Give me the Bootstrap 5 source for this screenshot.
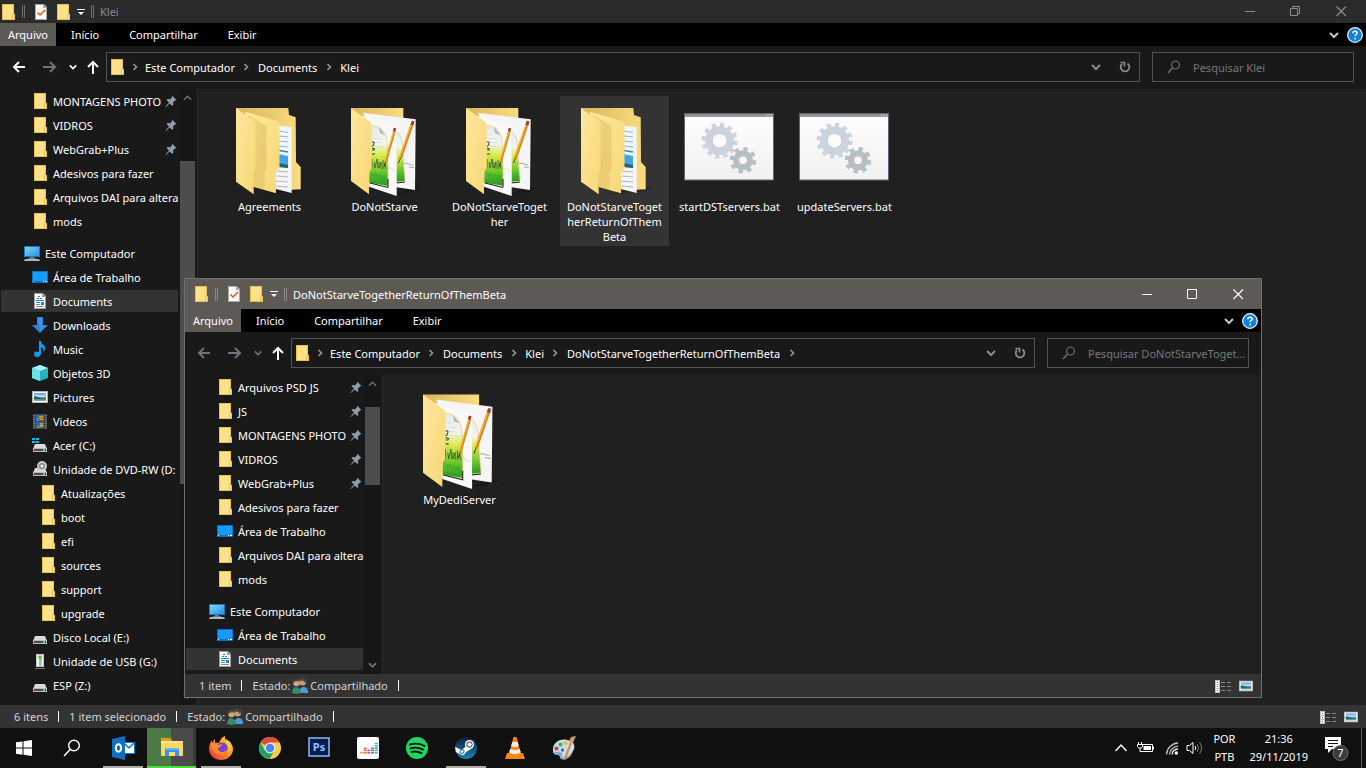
<!DOCTYPE html>
<html lang="pt-BR">
<head>
    <meta charset="UTF-8">
    <meta name="viewport" content="width=device-width, initial-scale=1.0">
    <title>Klei</title>
    <link href="https://cdn.jsdelivr.net/npm/bootstrap@5.3.3/dist/css/bootstrap.min.css" rel="stylesheet">
    <style>
        body {
            font-family: "Noto Sans", "Open Sans", sans-serif;
            font-size: 11px;
            line-height: 15px;
            color: #fff;
            background: #202020;
        }
        button {
            padding: 0;
            border: 0;
            color: inherit;
            background: none;
        }
        a {
            color: inherit;
            text-decoration: none;
        }
        svg {
            display: block;
            flex: none;
        }
        .ic {
            width: 16px;
            height: 16px;
        }

        /* explorer window */
        .win {
            background: #191919;
        }
        .win-title {
            height: 23px;
            padding-right: 2px;
            color: #8c8c8c;
            background: #2b2b2b;
        }
        .quick {
            gap: 6px;
        }
        .quick .first {
            margin-left: 2px;
        }
        .grip {
            width: 3px;
            height: 13px;
            border: solid #6d6d6d;
            border-width: 0 1px;
        }
        .win-btn {
            width: 46px;
            height: 100%;
        }
        .win-front {
            position: absolute;
            top: 278px;
            right: 104px;
            bottom: 30px;
            left: 184px;
            border: 1px solid #72706e;
        }
        .win-front .win-title {
            height: 30px;
            padding-left: 8px;
            padding-right: 0;
            color: #fff;
            background: #5d5955;
        }
        .win-front .grip {
            border-color: #8b8885;
        }

        .ribbon {
            height: 23px;
            padding-right: 3px;
            color: #fff;
            background: #000;
        }
        .ribbon-tab {
            height: 100%;
            padding: 0 15px;
        }
        .ribbon-tab.current {
            padding: 0 8px;
            background: #5d5955;
        }
        .ribbon-more {
            color: #c4c4c4;
        }

        .address {
            height: 43px;
            padding: 6px 12px 7px 0;
        }
        .nav-keys {
            width: 106px;
            padding: 0 6px 0 12px;
        }
        .path-box, .find-box {
            height: 30px;
            border: 1px solid #535353;
        }
        .path-box {
            margin-right: 12px;
            padding-left: 2px;
        }
        .sep {
            width: 23px;
            color: #9a9a9a;
        }
        .sep.lead-in {
            width: 20px;
        }
        .path-end {
            width: 29px;
            height: 100%;
            color: #8c8c8c;
        }
        .find-box {
            width: 202px;
            padding-left: 14px;
            color: #787878;
        }
        .find-box input {
            min-width: 0;
            padding: 0;
            border: 0;
            outline: 0;
            color: #fff;
            background: none;
        }
        .find-box input::placeholder {
            color: #787878;
            opacity: 1;
        }

        /* folder tree */
        .tree {
            width: 180px;
            padding: 1px 1px 0;
            gap: 2px;
        }
        .tree a {
            display: flex;
            flex: none;
            align-items: center;
            gap: 5px;
            height: 22px;
            padding-left: 31px;
            white-space: nowrap;
        }
        .tree a.root {
            margin-top: 8px;
            padding-left: 23px;
        }
        .tree a.deep {
            padding-left: 39px;
        }
        .tree a.picked {
            margin-right: 1px;
            background: #333;
        }
        .tree .pinned span {
            width: 110px;
        }
        .tree .pin {
            width: 12px;
            height: 12px;
            margin-left: -3px;
        }
        .scroller {
            width: 15px;
            background: #171717;
        }
        .scroller svg {
            margin: 4px auto;
        }
        .thumb {
            background: #4d4d4d;
        }
        .files {
            margin-left: 2px;
            padding: 7px 17px;
            gap: 6px;
            border-left: 1px solid #2b2b2b;
            background: #202020;
        }
        .file {
            width: 109px;
            padding: 5px 0 2px;
            text-align: center;
        }
        .file.picked {
            background: #333;
        }
        .file svg {
            width: 96px;
            height: 96px;
            margin: 0 auto 2px;
        }
        .files-front {
            padding-left: 22px;
        }
        .files-front .file svg {
            width: 103px;
            height: 103px;
        }

        .status {
            height: 23px;
            padding: 0 8px 0 14px;
            color: #d4d4d4;
            background: #333;
        }
        .status .shared {
            margin: 0 2px;
        }
        .bar {
            width: 1px;
            height: 11px;
            margin: 0 10px;
            background: #fff;
        }

        /* taskbar */
        .taskbar {
            height: 40px;
            background: #101010;
        }
        .sys-key {
            width: 48px;
            height: 100%;
        }
        .apps {
            height: 100%;
            margin-left: 2px;
        }
        .app {
            position: relative;
            display: flex;
            align-items: center;
            justify-content: center;
            width: 49px;
            height: 100%;
        }
        .app svg {
            width: 24px;
            height: 24px;
        }
        .app.open::after {
            content: "";
            position: absolute;
            bottom: 0;
            width: 40px;
            height: 2px;
            background: #b0aba8;
        }
        .app.busy {
            border-bottom: 2px solid #4be037;
            background: linear-gradient(90deg, #4a7a45 24px, #4a4a4a 24px, #4a4a4a 46px, #3a3a3a 46px);
        }
        .tray {
            gap: 6px;
            margin-right: 9px;
        }
        .clock {
            line-height: 18px;
            text-align: center;
        }
        .desk-edge {
            width: 5px;
            border-left: 1px solid #5c5c5c;
        }
    </style>
</head>
<body>
    <svg width="0" height="0" class="position-absolute" aria-hidden="true">
        <defs>
            <linearGradient id="gFlap" x1="0" y1="0" x2="1" y2="1"><stop offset="0" stop-color="#ffe79c"/><stop offset="1" stop-color="#f8d775"/></linearGradient>
            <linearGradient id="gBack" x1="0" y1="0" x2="1" y2="0"><stop offset="0" stop-color="#d9b65c"/><stop offset="1" stop-color="#fbdc80"/></linearGradient>
            <linearGradient id="gPad" x1="0" y1="0" x2="0" y2="1"><stop offset="0" stop-color="#e4e9ee"/><stop offset=".3" stop-color="#f3f6ec"/><stop offset=".5" stop-color="#dbe94a"/><stop offset=".75" stop-color="#73c82d"/><stop offset="1" stop-color="#1c9a22"/></linearGradient>
            <linearGradient id="gBlue" x1="0" y1="0" x2="1" y2="1"><stop offset="0" stop-color="#8bd3fb"/><stop offset="1" stop-color="#1f94e6"/></linearGradient>
            <linearGradient id="gBat" x1="0" y1="0" x2="0" y2="1"><stop offset="0" stop-color="#fdfdfd"/><stop offset="1" stop-color="#f1f1f1"/></linearGradient>
            <linearGradient id="gSky" x1="0" y1="0" x2="0" y2="1"><stop offset="0" stop-color="#4d9df0"/><stop offset=".5" stop-color="#d5ecf8"/><stop offset=".6" stop-color="#2c6a6a"/><stop offset="1" stop-color="#77b9cf"/></linearGradient>
            <linearGradient id="gFox" x1="1" y1="0" x2="0" y2="1"><stop offset="0" stop-color="#ffe03a"/><stop offset=".45" stop-color="#ff9421"/><stop offset="1" stop-color="#f5204f"/></linearGradient>
            <linearGradient id="gSteam" x1="0" y1="0" x2="0" y2="1"><stop offset="0" stop-color="#131c3d"/><stop offset="1" stop-color="#1586b8"/></linearGradient>
        </defs>
        <symbol id="folder" viewBox="0 0 16 16"><path d="M2 0h12v9.500l1 .500v6H2z" fill="#e8c04b"/><path d="M3 1h10v9l-1 1v4H3z" fill="#ffe18a"/><path d="M13 11h1v4h-1z" fill="#fff0b5"/></symbol>
        <symbol id="pin" viewBox="0 0 12 12"><path d="M7 .500L11.500 5l-1.500.500-2 2 .200 2.500-1 1L4.700 8.500 1 12l-.500-.500L4 7.500 1.500 5l1-1 2.500.200 2-2z" fill="#8d9ba6"/></symbol>
        <symbol id="check" viewBox="0 0 16 16"><path d="M2 0h9l3 3v13H2z" fill="#a9a9a9"/><path d="M3 1h7v3h3v11H3z" fill="#fafafa"/><path d="M4.500 8.500L7 11l5-5" fill="none" stroke="#e8551d" stroke-width="1.500"/></symbol>
        <symbol id="pc" viewBox="0 0 16 16"><path d="M0 1h16v11H0z" fill="#2176ae"/><path d="M1 2h14v9H1z" fill="url(#gBlue)"/><path d="M6 12h4v1H6zM4 13h8v1H4z" fill="#6e7b84"/><path d="M1 14h14l1 2H0z" fill="#a8b9c5"/></symbol>
        <symbol id="desk" viewBox="0 0 16 16"><path d="M0 2h16v12H0z" fill="#0c70c6"/><path d="M1 3h14v9H1z" fill="#159bff"/><path d="M1 12h1v1H1zM11 12h1v1h-1zM13 12h2v1h-2z" fill="#fff"/></symbol>
        <symbol id="docs" viewBox="0 0 16 16"><path d="M2 0h9l3 3v13H2z" fill="#a0a0a0"/><path d="M3 1h7v3h3v11H3z" fill="#fff"/><path d="M6 3.500h2M5 5.500h2M8 5.500h2M4 7.500h8M4 9.500h4" stroke="#1a83c9"/><path d="M9 9h3v3H9z" fill="#2c86a3"/><path d="M4 11.500h4M4 13.500h8" stroke="#888"/></symbol>
        <symbol id="down" viewBox="0 0 16 16"><path d="M5 0h6v8h5l-8 8-8-8h5z" fill="#2f82d5"/><path d="M6 1h4v8h3l-5 5z" fill="#3d93e6"/></symbol>
        <symbol id="music" viewBox="0 0 16 16"><path d="M7 0h2c0 3 4 4 4 7 0 2-1 3-2 4 1-3 0-4-2-5v6c0 5-7 5-7 1 0-3 3-3 5-2z" fill="#109cf5"/></symbol>
        <symbol id="cube" viewBox="0 0 16 16"><path d="M0 3l8-3 8 3v10l-8 3-8-3z" fill="#25b2c2"/><path d="M0 3l8-3 8 3-8 3z" fill="#aaf2f7"/><path d="M0 3l8 3v10l-8-3z" fill="#6de0e7"/></symbol>
        <symbol id="pics" viewBox="0 0 16 16"><path d="M0 2h16v12H0z" fill="#b5b5b5"/><path d="M1 3h14v10H1z" fill="#fff"/><path d="M2 4h12v8H2z" fill="url(#gSky)"/><path d="M2 7l4 1 5 2H2z" fill="#276258"/></symbol>
        <symbol id="film" viewBox="0 0 16 16"><path d="M1 1h14v15H1z" fill="#474747"/><path d="M2 2v13M14 2v13" stroke="#a5a5a5" stroke-dasharray="1 1"/><path d="M4 2h8v6H4zM4 9h8v6H4z" fill="#2767c8"/><path d="M7 3h4v4H8zM8 10h3v4H8z" fill="#d69a28"/><path d="M5 5h2v3H5zM5 13h3v2H5z" fill="#5a9f47"/><path d="M9 4h1v2H9zM9 11h1v1H9z" fill="#d83c21"/></symbol>
        <symbol id="drive" viewBox="0 0 16 16"><path d="M3 7h10l2 5H1z" fill="#dadada"/><path d="M1 11h14v4H1z" fill="#bcbcbc"/><path d="M2 12h12v2H2z" fill="#4b4b4b"/><path d="M11 12h2v2h-2z" fill="#4ae04b"/></symbol>
        <symbol id="win-drive" viewBox="0 0 16 16"><use href="#drive"/><path d="M0 1h3v2H0zM4 1h3v2H4zM0 4h3v2H0zM4 4h3v2H4z" fill="#0fb8f0"/></symbol>
        <symbol id="dvd" viewBox="0 0 16 16"><use href="#drive"/><circle cx="10" cy="5" r="4" fill="#888" stroke="#c8c8c8" stroke-width="2"/><circle cx="10" cy="5" r="1.500" fill="#f3f3f3"/></symbol>
        <symbol id="usb" viewBox="0 0 16 16"><path d="M4 1h8v13H4z" fill="#c4c9c4"/><path d="M5 2h2v11H5zM10 2h1v11h-1z" fill="#f4f6f4"/><path d="M7 5h2v8H7z" fill="#b2b8b2"/><path d="M6 3h4v2H9v2H7V5H6z" fill="#70bd53"/><path d="M3 15h10v1H3z" fill="#777"/></symbol>
        <symbol id="people" viewBox="0 0 16 16"><circle cx="10.500" cy="4" r="3.500" fill="#c59979"/><path d="M7 3c0-4 7-4 7 0l-1 2c-1-3-4-3-6-2" fill="#464240"/><path d="M7 15c0-7 8-8 9-2v2z" fill="#4f9bd0"/><circle cx="4.500" cy="5" r="3.200" fill="#d6a57f"/><path d="M1 5c0-5 6-5 7-1-2-1-4-1-5 0z" fill="#5b4a3f"/><path d="M0 15c0-8 8-8 9 0-2 1-7 1-9 0z" fill="#368a70"/></symbol>
        <symbol id="details" viewBox="0 0 16 16"><path d="M0 2h5v13H0z" fill="#c0c0c0"/><path d="M1 3h3v3H1zM1 7h3v3H1zM1 11h3v3H1z" fill="#fff"/><path d="M2 4h1v1H2z" fill="#4778bb"/><path d="M2 8h1v1H2z" fill="#2671e0"/><path d="M2 12h1v1H2z" fill="#d92a2a"/><path d="M6 4.500h4M12 4.500h4M6 8.500h4M12 8.500h4M6 12.500h4M12 12.500h4" stroke="#868686"/></symbol>
        <symbol id="chev-r" viewBox="0 0 8 8"><path d="M2.500 1l3 3-3 3" fill="none" stroke="currentColor" stroke-width="1.500"/></symbol>
        <symbol id="chev-d" viewBox="0 0 10 10"><path d="M1 3l4 4 4-4" fill="none" stroke="currentColor" stroke-width="2"/></symbol>
        <symbol id="chev-u" viewBox="0 0 10 10"><path d="M1 7l4-4 4 4" fill="none" stroke="currentColor" stroke-width="1.500"/></symbol>
        <symbol id="left" viewBox="0 0 14 14"><path d="M13 7H2M7 2L2 7l5 5" fill="none" stroke="currentColor" stroke-width="2"/></symbol>
        <symbol id="right" viewBox="0 0 14 14"><path d="M0 7h12M7 2l5 5-5 5" fill="none" stroke="currentColor" stroke-width="2"/></symbol>
        <symbol id="up" viewBox="0 0 14 14"><path d="M7 14V2M2 7l5-5 5 5" fill="none" stroke="currentColor" stroke-width="2"/></symbol>
        <symbol id="drop" viewBox="0 0 8 8"><path d="M0 1.500h8" stroke="currentColor"/><path d="M1 4h6L4 7z" fill="currentColor"/></symbol>
        <symbol id="reload" viewBox="0 0 12 12"><path d="M8.500 2.500A4.300 4.300 0 1 1 3 3" fill="none" stroke="currentColor" stroke-width="1.800"/><path d="M1.500 1.500h4v4" fill="none" stroke="currentColor" stroke-width="1.600"/></symbol>
        <symbol id="find" viewBox="0 0 14 14"><circle cx="8.500" cy="5" r="4" fill="none" stroke="currentColor"/><path d="M5.500 8L1 13" stroke="currentColor" stroke-width="1.200"/></symbol>
        <symbol id="help" viewBox="0 0 16 16"><circle cx="8" cy="8" r="7.300" fill="#1380db" stroke="#e4f1fb" stroke-width="1.300"/><path d="M5.800 6.300c0-3 4.500-2.600 4.300-.200C10 7.600 8.100 7.500 8.100 9.300M8.100 10.800v1.600" fill="none" stroke="#fff" stroke-width="1.500"/></symbol>
        <symbol id="min" viewBox="0 0 11 11"><path d="M1 5.500h10" stroke="currentColor"/></symbol>
        <symbol id="max" viewBox="0 0 11 11"><path d="M.500.500h9v9h-9z" fill="none" stroke="currentColor"/></symbol>
        <symbol id="restore" viewBox="0 0 11 11"><path d="M.500 2.500h7v7h-7zM2.500 2V.500h7v7H8" fill="none" stroke="currentColor"/></symbol>
        <symbol id="close" viewBox="0 0 11 11"><path d="M.500.500l9.500 9.500M10 .500L.500 10" stroke="currentColor" stroke-width="1.200"/></symbol>

        <!-- large folder holding another folder and a document -->
        <symbol id="big-docs" viewBox="0 0 96 96">
            <path d="M66 88l20-2-8 4-40 4z" fill="#111" opacity=".4"/>
            <path d="M14 7h52.300l.700 7 6.700 2.300L74 61l4.700 5v22.300L66 89 14 70z" fill="url(#gBack)"/>
            <path d="M54 24l15.700 2.300V92L50 87z" fill="#f4f5f7"/>
            <path d="M57 30l9 1.500M57 35l9 1M57 40l9 1M57 45l9 1" stroke="#7dbbe5"/>
            <path d="M57 49.500l9 1.500" stroke="#248bd4" stroke-width="1.600"/>
            <path d="M57 53l9 2v12l-9-1z" fill="#45a2e5"/><path d="M57 62l9 2v3l-9-1z" fill="#27636b"/>
            <path d="M55 70l11 1M55 75l11 1M54 80l12 1M54 85l12 1" stroke="#b5b5b8"/>
            <path d="M23 10.700l32.500 9.300q2 1 2 3v44L54 70.700v21.600L31.700 86z" fill="url(#gFlap)"/>
            <path d="M26 14l17 10q1.500 1 1.500 3v41l-2 3v17l-10.800-3z" fill="#dab95f" opacity=".45"/>
            <path d="M14 7l17 12q2.500 2 2.500 4v46l-1.800 3v21.300L14 80.700z" fill="url(#gFlap)"/>
        </symbol>
        <!-- large folder holding two notepad style files -->
        <symbol id="big-notes" viewBox="0 0 96 96">
            <path d="M70 88l16-2-8 4-18 4z" fill="#111" opacity=".4"/>
            <path d="M14 7h52.300v20L30 30z" fill="url(#gBack)"/>
            <path d="M26 11.700l52.700 6.600L78 89l-20-3z" fill="#f5f5f6"/>
            <path d="M59 30q7 4 6.500 20l2.500 30-9 1z" fill="url(#gPad)" stroke="#e8c46e" stroke-width=".600"/>
            <path d="M59 82l9-1" stroke="#222"/>
            <path d="M75.500 22L63.500 57" stroke="#d6881a" stroke-width="3"/><path d="M74.700 22L63 56" stroke="#ffc038"/>
            <path d="M76 20l-1 4" stroke="#99403e" stroke-width="3"/><path d="M63.500 57l-2 5" stroke="#444"/>
            <path d="M67 62l5 1 4 1M72 66l5 .500" stroke="#aaa" fill="none"/>
            <path d="M16 12.300L59.700 25v70L32 85.700z" fill="#f9f9fa"/>
            <path d="M33 24l9 2q7 4 8 14l1 17v28l-19-3z" fill="url(#gPad)" stroke="#e9cc85" stroke-width=".700"/>
            <path d="M42 26l1 6 5 2z" fill="#aeb2b8"/>
            <path d="M33 82l18 4.500V78" fill="none" stroke="#222"/>
            <path d="M34 33l6 1M34 37l11 1M34 41l12 1M34 45l13 1" stroke="#cdd5de" stroke-width=".700"/>
            <path d="M35 41q3-1 2 2t-2 2M35 47l3 1-2 2M35 53h3" fill="none" stroke="#37432c"/>
            <path d="M35 49h3" stroke="#3db23a" stroke-width="1.500"/>
            <path d="M35 58v9M37 61l1 6 2-9 1 9M42 61v6l2-6v7M46 59v9M48 62l1 6" fill="none" stroke="#3f6a2a" stroke-width=".900"/>
            <path d="M34 75l2-3 1 4 2-4 2 5 2-4 2 5 2-4 1 5" fill="none" stroke="#2faa2b" stroke-width=".800"/>
            <path d="M57.500 30L48.500 61" stroke="#d6881a" stroke-width="2.600"/><path d="M56.800 30L48 60" stroke="#ffc038"/>
            <path d="M58 27l-1 3.500" stroke="#99403e" stroke-width="2.600"/><path d="M48.500 61l-1.500 5" stroke="#333"/>
            <path d="M51 66l7 4" stroke="#e3dfcd"/>
            <path d="M14 7l18 13q2.700 2 2.700 4v43L32 70.700v22.600L14 80z" fill="url(#gFlap)"/>
        </symbol>
        <!-- batch file: window with two gears -->
        <symbol id="big-bat" viewBox="0 0 96 96">
            <path d="M2 12h90v67.500H2z" fill="#62666c"/><path d="M3 15.500h88V78.500H3z" fill="url(#gBat)"/><path d="M3 13h88v2.500H3z" fill="#8b8f96"/>
            <path d="M84 14h1.500M86.500 14h1.500M89 14h1.500" stroke="#d5d8dc"/>
            <g fill="none" stroke="#cbd4dc"><circle cx="37.500" cy="39.700" r="10.800" stroke-width="7.500"/><circle cx="37.500" cy="39.700" r="15.700" stroke-width="4.500" stroke-dasharray="4.110 4.110"/></g>
            <circle cx="37.500" cy="39.700" r="7.200" fill="#fbfbfb" stroke="#b7c1ca" stroke-width=".700"/>
            <g fill="none" stroke="#b6bfc4"><circle cx="61" cy="59.300" r="6.800" stroke-width="6.500"/><circle cx="61" cy="59.300" r="11" stroke-width="4.500" stroke-dasharray="4.320 4.320"/></g>
            <circle cx="61" cy="59.300" r="3.700" fill="#f8f8f8"/>
        </symbol>
    </svg>

    <div class="vh-100 d-flex flex-column overflow-hidden">
        <div class="flex-grow-1 position-relative d-flex flex-column overflow-hidden">

            <!-- maximized window -->
            <section class="win flex-grow-1 d-flex flex-column overflow-hidden">
                <header class="win-title d-flex align-items-center">
                    <div class="quick d-flex align-items-center flex-grow-1">
                        <svg class="ic"><use href="#folder"/></svg>
                        <div class="grip"></div>
                        <button aria-label="Propriedades" class="first"><svg class="ic"><use href="#check"/></svg></button>
                        <button aria-label="Nova pasta"><svg class="ic"><use href="#folder"/></svg></button>
                        <button aria-label="Personalizar" class="text-white"><svg width="8" height="8"><use href="#drop"/></svg></button>
                        <div class="grip"></div>
                        <span>Klei</span>
                    </div>
                    <button class="win-btn d-flex align-items-center justify-content-center" aria-label="Minimizar"><svg width="11" height="11"><use href="#min"/></svg></button>
                    <button class="win-btn d-flex align-items-center justify-content-center" aria-label="Restaurar"><svg width="11" height="11"><use href="#restore"/></svg></button>
                    <button class="win-btn d-flex align-items-center justify-content-center" aria-label="Fechar"><svg width="11" height="11"><use href="#close"/></svg></button>
                </header>
                <nav class="ribbon d-flex align-items-center">
                    <button class="ribbon-tab current">Arquivo</button>
                    <button class="ribbon-tab">Início</button>
                    <button class="ribbon-tab">Compartilhar</button>
                    <button class="ribbon-tab">Exibir</button>
                    <button class="ribbon-more ms-auto me-2" aria-label="Expandir"><svg width="10" height="10"><use href="#chev-d"/></svg></button>
                    <button aria-label="Ajuda"><svg class="ic"><use href="#help"/></svg></button>
                </nav>
                <div class="address d-flex">
                    <div class="nav-keys d-flex align-items-center justify-content-between">
                        <button aria-label="Voltar"><svg width="14" height="14"><use href="#left"/></svg></button>
                        <button aria-label="Avançar" class="ms-2 text-secondary"><svg width="14" height="14"><use href="#right"/></svg></button>
                        <button aria-label="Recentes" class="ms-1"><svg width="8" height="8"><use href="#chev-d"/></svg></button>
                        <button aria-label="Acima"><svg width="14" height="14"><use href="#up"/></svg></button>
                    </div>
                    <div class="path-box d-flex align-items-center flex-grow-1">
                        <svg class="ic"><use href="#folder"/></svg>
                        <span class="sep lead-in d-flex justify-content-center"><svg width="8" height="8"><use href="#chev-r"/></svg></span>
                        <a href="#">Este Computador</a>
                        <span class="sep d-flex justify-content-center"><svg width="8" height="8"><use href="#chev-r"/></svg></span>
                        <a href="#">Documents</a>
                        <span class="sep d-flex justify-content-center"><svg width="8" height="8"><use href="#chev-r"/></svg></span>
                        <a href="#">Klei</a>
                        <button class="path-end ms-auto d-flex align-items-center justify-content-center" aria-label="Locais anteriores"><svg width="10" height="10"><use href="#chev-d"/></svg></button>
                        <button class="path-end d-flex align-items-center justify-content-center" aria-label="Atualizar"><svg width="12" height="12"><use href="#reload"/></svg></button>
                    </div>
                    <div class="find-box d-flex align-items-center gap-2">
                        <svg width="14" height="14" class="me-1"><use href="#find"/></svg>
                        <label for="find-klei" class="visually-hidden">Pesquisar Klei</label>
                        <input type="text" id="find-klei" class="flex-grow-1" placeholder="Pesquisar Klei">
                    </div>
                </div>
                <div class="flex-grow-1 d-flex overflow-hidden">
                    <nav class="tree d-flex flex-column overflow-hidden flex-shrink-0">
                        <a href="#" class="pinned"><svg class="ic"><use href="#folder"/></svg><span>MONTAGENS PHOTO</span><svg class="pin"><use href="#pin"/></svg></a>
                        <a href="#" class="pinned"><svg class="ic"><use href="#folder"/></svg><span>VIDROS</span><svg class="pin"><use href="#pin"/></svg></a>
                        <a href="#" class="pinned"><svg class="ic"><use href="#folder"/></svg><span>WebGrab+Plus</span><svg class="pin"><use href="#pin"/></svg></a>
                        <a href="#"><svg class="ic"><use href="#folder"/></svg>Adesivos para fazer</a>
                        <a href="#"><svg class="ic"><use href="#folder"/></svg>Arquivos DAI para altera</a>
                        <a href="#"><svg class="ic"><use href="#folder"/></svg>mods</a>
                        <a href="#" class="root"><svg class="ic"><use href="#pc"/></svg>Este Computador</a>
                        <a href="#"><svg class="ic"><use href="#desk"/></svg>Área de Trabalho</a>
                        <a href="#" class="picked"><svg class="ic"><use href="#docs"/></svg>Documents</a>
                        <a href="#"><svg class="ic"><use href="#down"/></svg>Downloads</a>
                        <a href="#"><svg class="ic"><use href="#music"/></svg>Music</a>
                        <a href="#"><svg class="ic"><use href="#cube"/></svg>Objetos 3D</a>
                        <a href="#"><svg class="ic"><use href="#pics"/></svg>Pictures</a>
                        <a href="#"><svg class="ic"><use href="#film"/></svg>Videos</a>
                        <a href="#"><svg class="ic"><use href="#win-drive"/></svg>Acer (C:)</a>
                        <a href="#"><svg class="ic"><use href="#dvd"/></svg>Unidade de DVD-RW (D:</a>
                        <a href="#" class="deep"><svg class="ic"><use href="#folder"/></svg>Atualizações</a>
                        <a href="#" class="deep"><svg class="ic"><use href="#folder"/></svg>boot</a>
                        <a href="#" class="deep"><svg class="ic"><use href="#folder"/></svg>efi</a>
                        <a href="#" class="deep"><svg class="ic"><use href="#folder"/></svg>sources</a>
                        <a href="#" class="deep"><svg class="ic"><use href="#folder"/></svg>support</a>
                        <a href="#" class="deep"><svg class="ic"><use href="#folder"/></svg>upgrade</a>
                        <a href="#"><svg class="ic"><use href="#drive"/></svg>Disco Local (E:)</a>
                        <a href="#"><svg class="ic"><use href="#usb"/></svg>Unidade de USB (G:)</a>
                        <a href="#"><svg class="ic"><use href="#drive"/></svg>ESP (Z:)</a>
                    </nav>
                    <div class="scroller d-flex flex-column flex-shrink-0 text-secondary">
                        <svg width="9" height="10"><use href="#chev-u"/></svg>
                        <div style="flex: 54"></div>
                        <div class="thumb" style="flex: 323"></div>
                        <div style="flex: 203"></div>
                        <svg width="9" height="10"><use href="#chev-d"/></svg>
                    </div>
                    <main class="files flex-grow-1 d-flex flex-wrap align-items-start align-content-start">
                        <a href="#" class="file"><svg><use href="#big-docs"/></svg>Agreements</a>
                        <a href="#" class="file"><svg><use href="#big-notes"/></svg>DoNotStarve</a>
                        <a href="#" class="file"><svg><use href="#big-notes"/></svg>DoNotStarveToget<br>her</a>
                        <a href="#" class="file picked"><svg><use href="#big-docs"/></svg>DoNotStarveToget<br>herReturnOfThem<br>Beta</a>
                        <a href="#" class="file"><svg><use href="#big-bat"/></svg>startDSTservers.bat</a>
                        <a href="#" class="file"><svg><use href="#big-bat"/></svg>updateServers.bat</a>
                    </main>
                </div>
                <footer class="status d-flex align-items-center">
                    <span>6 itens</span><span class="bar"></span>
                    <span>1 item selecionado</span><span class="bar"></span>
                    <span>Estado:</span><svg class="ic shared"><use href="#people"/></svg><span>Compartilhado</span><span class="bar"></span>
                    <button class="ms-auto me-2" aria-label="Detalhes"><svg class="ic"><use href="#details"/></svg></button>
                    <button aria-label="Miniaturas"><svg width="14" height="14"><use href="#pics"/></svg></button>
                </footer>
            </section>

            <!-- window in front -->
            <section class="win win-front d-flex flex-column overflow-hidden">
                <header class="win-title d-flex align-items-center">
                    <div class="quick d-flex align-items-center flex-grow-1">
                        <svg class="ic"><use href="#folder"/></svg>
                        <div class="grip"></div>
                        <button aria-label="Propriedades" class="first"><svg class="ic"><use href="#check"/></svg></button>
                        <button aria-label="Nova pasta"><svg class="ic"><use href="#folder"/></svg></button>
                        <button aria-label="Personalizar"><svg width="8" height="8"><use href="#drop"/></svg></button>
                        <div class="grip"></div>
                        <span>DoNotStarveTogetherReturnOfThemBeta</span>
                    </div>
                    <button class="win-btn d-flex align-items-center justify-content-center" aria-label="Minimizar"><svg width="11" height="11"><use href="#min"/></svg></button>
                    <button class="win-btn d-flex align-items-center justify-content-center" aria-label="Maximizar"><svg width="11" height="11"><use href="#max"/></svg></button>
                    <button class="win-btn d-flex align-items-center justify-content-center" aria-label="Fechar"><svg width="11" height="11"><use href="#close"/></svg></button>
                </header>
                <nav class="ribbon d-flex align-items-center">
                    <button class="ribbon-tab current">Arquivo</button>
                    <button class="ribbon-tab">Início</button>
                    <button class="ribbon-tab">Compartilhar</button>
                    <button class="ribbon-tab">Exibir</button>
                    <button class="ribbon-more ms-auto me-2" aria-label="Expandir"><svg width="10" height="10"><use href="#chev-d"/></svg></button>
                    <button aria-label="Ajuda"><svg class="ic"><use href="#help"/></svg></button>
                </nav>
                <div class="address d-flex">
                    <div class="nav-keys d-flex align-items-center justify-content-between">
                        <button aria-label="Voltar" class="text-secondary"><svg width="14" height="14"><use href="#left"/></svg></button>
                        <button aria-label="Avançar" class="ms-2 text-secondary"><svg width="14" height="14"><use href="#right"/></svg></button>
                        <button aria-label="Recentes" class="ms-1 text-secondary"><svg width="8" height="8"><use href="#chev-d"/></svg></button>
                        <button aria-label="Acima"><svg width="14" height="14"><use href="#up"/></svg></button>
                    </div>
                    <div class="path-box d-flex align-items-center flex-grow-1">
                        <svg class="ic"><use href="#folder"/></svg>
                        <span class="sep lead-in d-flex justify-content-center"><svg width="8" height="8"><use href="#chev-r"/></svg></span>
                        <a href="#">Este Computador</a>
                        <span class="sep d-flex justify-content-center"><svg width="8" height="8"><use href="#chev-r"/></svg></span>
                        <a href="#">Documents</a>
                        <span class="sep d-flex justify-content-center"><svg width="8" height="8"><use href="#chev-r"/></svg></span>
                        <a href="#">Klei</a>
                        <span class="sep d-flex justify-content-center"><svg width="8" height="8"><use href="#chev-r"/></svg></span>
                        <a href="#">DoNotStarveTogetherReturnOfThemBeta</a>
                        <span class="sep d-flex justify-content-center"><svg width="8" height="8"><use href="#chev-r"/></svg></span>
                        <button class="path-end ms-auto d-flex align-items-center justify-content-center" aria-label="Locais anteriores"><svg width="10" height="10"><use href="#chev-d"/></svg></button>
                        <button class="path-end d-flex align-items-center justify-content-center" aria-label="Atualizar"><svg width="12" height="12"><use href="#reload"/></svg></button>
                    </div>
                    <div class="find-box d-flex align-items-center gap-2">
                        <svg width="14" height="14" class="me-1"><use href="#find"/></svg>
                        <label for="find-beta" class="visually-hidden">Pesquisar</label>
                        <input type="text" id="find-beta" class="flex-grow-1" placeholder="Pesquisar DoNotStarveToget...">
                    </div>
                </div>
                <div class="flex-grow-1 d-flex overflow-hidden">
                    <nav class="tree d-flex flex-column overflow-hidden flex-shrink-0">
                        <a href="#" class="pinned"><svg class="ic"><use href="#folder"/></svg><span>Arquivos PSD JS</span><svg class="pin"><use href="#pin"/></svg></a>
                        <a href="#" class="pinned"><svg class="ic"><use href="#folder"/></svg><span>JS</span><svg class="pin"><use href="#pin"/></svg></a>
                        <a href="#" class="pinned"><svg class="ic"><use href="#folder"/></svg><span>MONTAGENS PHOTO</span><svg class="pin"><use href="#pin"/></svg></a>
                        <a href="#" class="pinned"><svg class="ic"><use href="#folder"/></svg><span>VIDROS</span><svg class="pin"><use href="#pin"/></svg></a>
                        <a href="#" class="pinned"><svg class="ic"><use href="#folder"/></svg><span>WebGrab+Plus</span><svg class="pin"><use href="#pin"/></svg></a>
                        <a href="#"><svg class="ic"><use href="#folder"/></svg>Adesivos para fazer</a>
                        <a href="#"><svg class="ic"><use href="#desk"/></svg>Área de Trabalho</a>
                        <a href="#"><svg class="ic"><use href="#folder"/></svg>Arquivos DAI para altera</a>
                        <a href="#"><svg class="ic"><use href="#folder"/></svg>mods</a>
                        <a href="#" class="root"><svg class="ic"><use href="#pc"/></svg>Este Computador</a>
                        <a href="#"><svg class="ic"><use href="#desk"/></svg>Área de Trabalho</a>
                        <a href="#" class="picked"><svg class="ic"><use href="#docs"/></svg>Documents</a>
                    </nav>
                    <div class="scroller d-flex flex-column flex-shrink-0 text-secondary">
                        <svg width="9" height="10"><use href="#chev-u"/></svg>
                        <div style="flex: 14"></div>
                        <div class="thumb" style="flex: 78"></div>
                        <div style="flex: 171"></div>
                        <svg width="9" height="10"><use href="#chev-d"/></svg>
                    </div>
                    <main class="files files-front flex-grow-1 d-flex flex-wrap align-items-start align-content-start">
                        <a href="#" class="file"><svg><use href="#big-notes"/></svg>MyDediServer</a>
                    </main>
                </div>
                <footer class="status d-flex align-items-center">
                    <span>1 item</span><span class="bar"></span>
                    <span>Estado:</span><svg class="ic shared"><use href="#people"/></svg><span>Compartilhado</span><span class="bar"></span>
                    <button class="ms-auto me-2" aria-label="Detalhes"><svg class="ic"><use href="#details"/></svg></button>
                    <button aria-label="Miniaturas"><svg width="14" height="14"><use href="#pics"/></svg></button>
                </footer>
            </section>
        </div>

        <div class="taskbar d-flex align-items-center flex-shrink-0">
            <button class="sys-key d-flex align-items-center justify-content-center" aria-label="Iniciar">
                <svg width="16" height="16" viewBox="0 0 16 16"><path d="M0 2.300l6.500-.900v6.200H0zM7.500 1.200L16 0v7.600H7.500zM0 8.500h6.500v6.200L0 13.800zM7.500 8.500H16V16l-8.500-1.200z" fill="#fff"/></svg>
            </button>
            <button class="sys-key d-flex align-items-center justify-content-center" aria-label="Pesquisar">
                <svg width="18" height="18" viewBox="0 0 18 18"><circle cx="11" cy="6.500" r="5.300" fill="none" stroke="#fff" stroke-width="1.400"/><path d="M7.200 10.500L1 17" stroke="#fff" stroke-width="1.500"/></svg>
            </button>
            <div class="apps d-flex">
                <button class="app open" aria-label="Outlook">
                    <svg viewBox="0 0 24 24"><path d="M13 6h11v12H13z" fill="#1276c8"/><path d="M14 7h9v10h-9z" fill="#fff"/><path d="M14 8l4 4 6-6" fill="none" stroke="#1276c8" stroke-width="1.500"/><path d="M1 3l13-3v24L1 21z" fill="#0f6fc2"/><ellipse cx="7.500" cy="12" rx="2.700" ry="3.700" fill="none" stroke="#fff" stroke-width="2"/></svg>
                </button>
                <button class="app busy" aria-label="Explorador de Arquivos">
                    <svg viewBox="0 0 24 24"><path d="M1 3h9l2 2v5H1z" fill="#e39f13"/><path d="M1 6h22v15H1z" fill="#ffd766"/><path d="M1 6h22v2H1z" fill="#ffe28b"/><path d="M5 13h14v8h-4v-4H9v4H5z" fill="#3996e6"/><path d="M5 13h14v2H5z" fill="#62b5f3"/></svg>
                </button>
                <button class="app open" aria-label="Firefox">
                    <svg viewBox="0 0 24 24"><path d="M12 24C5 24 0 19 0 12.500 0 9 1.500 6 3 4v3l3-4v4c1.500-.500 3-.500 4 0 1-3 3-6 6-7-.500 3 1 4 3 6l1-1c3 3 4 6 4 8 0 6-5 11-12 11z" fill="url(#gFox)"/><circle cx="13" cy="12" r="5.500" fill="#7643d0"/><path d="M2 8c3-1 5 0 7 1l4-1c0 2-2 3-4 4 0 5 6 5 9 2-1 5-12 7-15-1z" fill="#ff8d25"/><path d="M17 7c3 2 4 6 2 9 3-2 4-6 2-10l-4-3z" fill="#ffd43a"/></svg>
                </button>
                <button class="app" aria-label="Chrome">
                    <svg viewBox="0 0 24 24"><circle cx="12" cy="12" r="11" fill="#ffce44"/><path d="M12 12L2.500 6.500A11 11 0 0 1 21.500 6.500H12z" fill="#dd4b3e"/><path d="M2.500 6.500A11 11 0 0 0 11.500 23l5-8.500L12 12 7.300 14.800z" fill="#1da362"/><circle cx="12" cy="12" r="5.400" fill="#f2f5f8"/><circle cx="12" cy="12" r="4.300" fill="#4a87ee"/></svg>
                </button>
                <button class="app" aria-label="Photoshop">
                    <svg viewBox="0 0 24 24"><path d="M2 2h20v18H2z" fill="#0b1a50" stroke="#82bff8" stroke-width="1.500"/><text x="12" y="15" text-anchor="middle" font-size="11" font-weight="700" fill="#8dc7ff">Ps</text></svg>
                </button>
                <button class="app" aria-label="Deezer">
                    <svg viewBox="0 0 24 24"><rect x="1" y="1" width="22" height="22" rx="2" fill="#fff"/><g fill="none" stroke-width="3" stroke-dasharray="1.600 .700"><path d="M5.500 17.500v-2" stroke="#f7a43a"/><path d="M9.200 17.500v-6" stroke="#f16b50"/><path d="M12.900 17.500v-4" stroke="#c753a4"/><path d="M16.600 17.500v-6" stroke="#5a7bd2"/><path d="M20.300 17.500V6" stroke="#43bba0"/></g></svg>
                </button>
                <button class="app" aria-label="Spotify">
                    <svg viewBox="0 0 24 24"><circle cx="12" cy="12" r="11" fill="#1ed760"/><path d="M5 8.500c5-1.500 10-1 14.500 1.500M5.500 12.300c4.500-1.300 8.500-.800 12.500 1.300M6.500 16c3.500-1 7-.500 10 1.200" fill="none" stroke="#101010" stroke-width="1.900" stroke-linecap="round"/></svg>
                </button>
                <button class="app open" aria-label="Steam">
                    <svg viewBox="0 0 24 24"><circle cx="12" cy="12" r="11" fill="url(#gSteam)"/><path d="M1 11l7 3 4-4 5 3-5 3q-2 5-6 2l-4-2z" fill="#fff"/><circle cx="15.500" cy="8.500" r="4.500" fill="#fff"/><circle cx="15.500" cy="8.500" r="2.700" fill="#fff" stroke="#1b3159"/><circle cx="8" cy="15.500" r="2" fill="none" stroke="#1b5b88"/></svg>
                </button>
                <button class="app" aria-label="VLC">
                    <svg viewBox="0 0 24 24"><path d="M4 17h16l2 6H2z" fill="#f5860d"/><path d="M10.500 1h3l4.500 17q-6 4-12 0z" fill="#f58a16"/><path d="M9.300 6h5.400l1 4q-3.700 2-7.500 0zM7.200 13q5 2 9.600 0l1 3.500q-6 3-11.800 0z" fill="#eee"/></svg>
                </button>
                <button class="app" aria-label="Paint">
                    <svg viewBox="0 0 24 24"><path d="M1 15C0 7 8 2 15 4c7 1 9 6 6 11-3 6-10 9-12 6 2-3-1-4-3-3s-5 0-5-3z" fill="#c5dceb"/><path d="M1 15c2 3 6-1 9 2 1 2 0 3-1 4 4 2 9-2 12-6-2 7-8 10-12 8-2-1 0-3-3-4-3 0-5-1-5-4z" fill="#83adc9"/><circle cx="4.500" cy="12.500" r="2" fill="#d93a34"/><circle cx="8.500" cy="8.500" r="2" fill="#4bae49"/><circle cx="13.500" cy="7" r="2" fill="#efb929"/><circle cx="10.500" cy="14" r="1.500" fill="#245b9e"/><path d="M18 6l2 1-6 16-2 1 .500-3z" fill="#e98a2a"/><path d="M17 5l2-4 5-1-3 7z" fill="#c59a6c"/></svg>
                </button>
            </div>

            <div class="tray d-flex align-items-center ms-auto">
                <button aria-label="Mostrar ícones ocultos" class="me-1"><svg width="12" height="12" viewBox="0 0 12 12"><path d="M.500 9L6 3l5.500 6" fill="none" stroke="#fff" stroke-width="1.400"/></svg></button>
                <svg width="17" height="16" viewBox="0 0 17 16"><path d="M5 4.500h10.500v7H5" fill="none" stroke="#fff"/><path d="M6.500 6H14v4H6.500zM16 6.500h1v3h-1z" fill="#fff"/><path d="M1.500 2v2M4.500 2v2M.500 4.500h5v2l-1 1.500h-3l-1-1.500zM3 8v3.500h2" fill="none" stroke="#fff"/></svg>
                <svg width="16" height="16" viewBox="0 0 16 16" class="ms-1"><g fill="none" stroke-width="1.300"><path d="M2.500 14.500A12 12 0 0 1 14 3M5.500 14.500A9 9 0 0 1 14 6.200" stroke="#bbb"/><path d="M8 14.500a6 6 0 0 1 6-5.500" stroke="#fff"/></g><circle cx="12.300" cy="13" r="1.800" fill="#fff"/></svg>
                <svg width="17" height="16" viewBox="0 0 17 16"><path d="M1 5.500h2.500L7 2.500v11l-3.500-3H1z" fill="none" stroke="#fff"/><path d="M9 6q1.500 2 0 4" fill="none" stroke="#fff"/><path d="M11 4q3 4 0 8M13.500 2q4 6 0 12" fill="none" stroke="#777"/></svg>
                <div class="clock ms-1">POR<br>PTB</div>
                <div class="clock ms-2">21:36<br>29/11/2019</div>
            </div>
            <button aria-label="Notificações" class="ms-2 me-2"><svg width="28" height="26" viewBox="0 0 28 26"><path d="M0 2h16v12h-9l-4 4v-4H0z" fill="#fff"/><path d="M3 5.500h10M3 8.500h10M3 11.500h5" stroke="#101010"/><circle cx="15.500" cy="18" r="7.500" fill="#3b3b3b" stroke="#707070"/><text x="15.500" y="22" text-anchor="middle" font-size="11" fill="#fff">7</text></svg></button>
            <div class="desk-edge align-self-stretch"></div>
        </div>
    </div>
    <script src="https://cdn.jsdelivr.net/npm/bootstrap@5.3.3/dist/js/bootstrap.bundle.min.js"></script>
</body>
</html>
